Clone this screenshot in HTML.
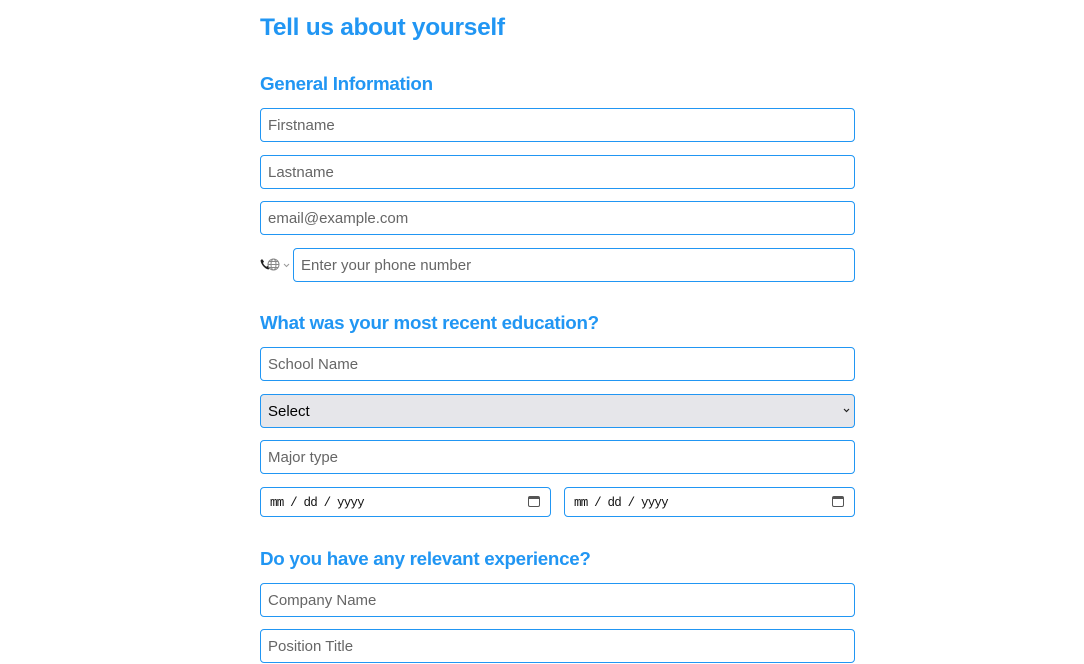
<!DOCTYPE html><html><head><style>
body{margin:0;width:1084px;height:651px;overflow:hidden;background:#fff;font-family:"Liberation Sans",sans-serif;position:relative}
.a{position:absolute}
h1,h2{margin:0;color:#2196f3;font-weight:bold;position:absolute;left:260px;letter-spacing:-0.3px}
h1{font-size:24.5px;top:14px}
h2{font-size:18.8px}
.i{position:absolute;left:260px;width:593px;height:32px;border:1px solid #2196f3;border-radius:4px;box-sizing:content-box;font-size:15px;color:#666;line-height:34px;text-indent:7px;background:#fff}
.d{position:absolute;height:28px;width:289px;border:1px solid #2196f3;border-radius:4px;font-family:"Liberation Mono",monospace;font-size:12.5px;letter-spacing:-0.8px;line-height:30px;color:#111;text-indent:9px}
.cal{position:absolute;right:10px;top:8px;width:12px;height:11px;border:1.5px solid #555;border-top-width:3px;border-radius:2px;box-sizing:border-box}
</style></head><body>
<h1>Tell us about yourself</h1>
<h2 style="top:73px">General Information</h2>
<div class="i" style="top:108px">Firstname</div>
<div class="i" style="top:155px">Lastname</div>
<div class="i" style="top:201px">email@example.com</div>
<svg class="a" style="left:260px;top:258px" width="10" height="12" viewBox="0 0 10 12"><path d="M2 1l2 2.5-1 1.5c.8 1.8 2 3 3.5 3.8l1.3-1 2 2.2-1.3 1.5C5 11 1 6.5 .5 2.5z" fill="#222"/></svg>
<svg class="a" style="left:267px;top:258px" width="13" height="13" viewBox="0 0 13 13" fill="none" stroke="#888" stroke-width="1"><circle cx="6.5" cy="6.5" r="5.5"/><ellipse cx="6.5" cy="6.5" rx="2.5" ry="5.5"/><path d="M1 6.5h11M2 3.5h9M2 9.5h9"/></svg>
<svg class="a" style="left:283px;top:263px" width="7" height="5" viewBox="0 0 7 5" fill="none" stroke="#999"><path d="M1 1l2.5 2.5L6 1"/></svg>
<div class="i" style="top:248px;left:293px;width:560px">Enter your phone number</div>
<h2 style="top:312px">What was your most recent education?</h2>
<div class="i" style="top:347px">School Name</div>
<div class="i" style="top:394px;background:#e6e6ea;color:#000">Select</div>
<svg class="a" style="left:843px;top:408px" width="7" height="5" viewBox="0 0 7 5" fill="none" stroke="#222" stroke-width="1.2"><path d="M1 1l2.5 2.5L6 1"/></svg>
<div class="i" style="top:440px">Major type</div>
<div class="d" style="left:260px;top:487px">mm / dd / yyyy<div class="cal"></div></div>
<div class="d" style="left:564px;top:487px">mm / dd / yyyy<div class="cal"></div></div>
<h2 style="top:548px">Do you have any relevant experience?</h2>
<div class="i" style="top:583px">Company Name</div>
<div class="i" style="top:629px">Position Title</div>
</body></html>
